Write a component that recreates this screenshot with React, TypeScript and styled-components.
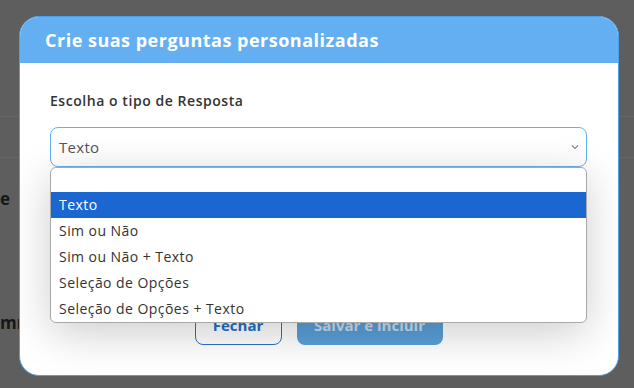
import { createGlobalStyle } from "styled-components";
import styled from "styled-components";

const GlobalStyle = createGlobalStyle`
  html, body {
    margin: 0;
    padding: 0;
    background: #5e5e5e;
    font-family: "Open Sans", "DejaVu Sans", sans-serif;
  }
  * {
    box-sizing: border-box;
  }
`;

const options = [
  "",
  "Texto",
  "Sim ou Não",
  "Sim ou Não + Texto",
  "Seleção de Opções",
  "Seleção de Opções + Texto",
];

const App = () => {
  return (
    <Page>
      <GlobalStyle />
      <BackRow />
      <BackSide>
        <BackWord top={31}>e</BackWord>
        <BackWord top={104}>mr</BackWord>
      </BackSide>

      <Modal>
        <Header>
          <Title>Crie suas perguntas personalizadas</Title>
        </Header>
        <Body>
          <Label>Escolha o tipo de Resposta</Label>
          <SelectWrap>
            <Select>
              <span>Texto</span>
              <svg width="10" height="10" viewBox="0 0 10 10">
                <path d="M2 3.5 L5 6.5 L8 3.5" fill="none" stroke="#8a8a8a" strokeWidth="1.2" />
              </svg>
            </Select>
            <List>
              {options.map((o, i) => (
                <Option key={i} active={i === 1} first={i === 0}>
                  {o}
                </Option>
              ))}
            </List>
          </SelectWrap>
          <Actions>
            <OutlineBtn>Fechar</OutlineBtn>
            <FilledBtn>Salvar e incluir</FilledBtn>
          </Actions>
        </Body>
      </Modal>
    </Page>
  );
};

const Page = styled.div`
  position: relative;
  width: 634px;
  height: 388px;
  overflow: hidden;
  background: #5e5e5e;
  padding-top: 116px;
`;

const BackRow = styled.div`
  height: 42px;
  border-top: 1px solid #666666;
  border-bottom: 1px solid #666666;
`;

const BackSide = styled.div`
  display: flex;
  flex-direction: column;
  align-items: flex-start;
`;

const BackWord = styled.div<{ top: number }>`
  margin-top: ${(p) => p.top}px;
  font-weight: 700;
  font-size: 17px;
  color: #161616;
  white-space: nowrap;
  line-height: 20px;
`;

const Modal = styled.div`
  position: absolute;
  left: 19px;
  top: 16px;
  width: 600px;
  height: 360px;
  border-radius: 20px;
  background: #ffffff;
  border: 1px solid #4d9fe8;
  overflow: hidden;
  display: flex;
  flex-direction: column;
`;

const Header = styled.div`
  height: 46px;
  background: #63aff2;
  padding: 0 25px;
  display: flex;
  align-items: center;
`;

const Title = styled.h2`
  margin: 0;
  color: #ffffff;
  font-size: 18px;
  font-weight: 700;
  letter-spacing: 0.5px;
`;

const Body = styled.div`
  flex: 1;
  padding: 28px 31px 0 30px;
  display: flex;
  flex-direction: column;
`;

const Label = styled.div`
  font-size: 14px;
  font-weight: 600;
  color: #333333;
  line-height: 20px;
  letter-spacing: 0.55px;
`;

const SelectWrap = styled.div`
  position: relative;
  margin-top: 16px;
`;

const Select = styled.div`
  height: 40px;
  border: 1px solid #64aff0;
  border-radius: 8px;
  display: flex;
  align-items: center;
  justify-content: space-between;
  padding: 0 6px 0 8px;
  font-size: 15px;
  color: #555555;
  letter-spacing: 0.3px;
`;

const List = styled.div`
  position: absolute;
  top: 40px;
  left: 0;
  right: 0;
  background: #ffffff;
  border: 1px solid #a8a8a8;
  border-radius: 6px;
  overflow: hidden;
  box-shadow: 0 10px 44px rgba(0, 0, 0, 0.2);
  z-index: 2;
`;

const Option = styled.div<{ active: boolean; first: boolean }>`
  height: ${(p) => (p.first ? "24px" : "26px")};
  line-height: 26px;
  padding-left: 8px;
  font-size: 14px;
  letter-spacing: 0.45px;
  color: ${(p) => (p.active ? "#ffffff" : "#333333")};
  background: ${(p) => (p.active ? "#1a67d2" : "transparent")};
`;

const Actions = styled.div`
  margin-top: 138px;
  display: flex;
  justify-content: center;
  gap: 15px;
`;

const OutlineBtn = styled.button`
  width: 87px;
  height: 40px;
  border: 1px solid #2a72c0;
  border-radius: 8px;
  background: #ffffff;
  color: #1f6fc4;
  font-family: inherit;
  font-size: 15px;
  font-weight: 700;
`;

const FilledBtn = styled.button`
  width: 146px;
  height: 40px;
  border: none;
  border-radius: 8px;
  background: #5a9fd8;
  color: #c9dcec;
  font-family: inherit;
  font-size: 15px;
  font-weight: 700;
`;

export default App;
